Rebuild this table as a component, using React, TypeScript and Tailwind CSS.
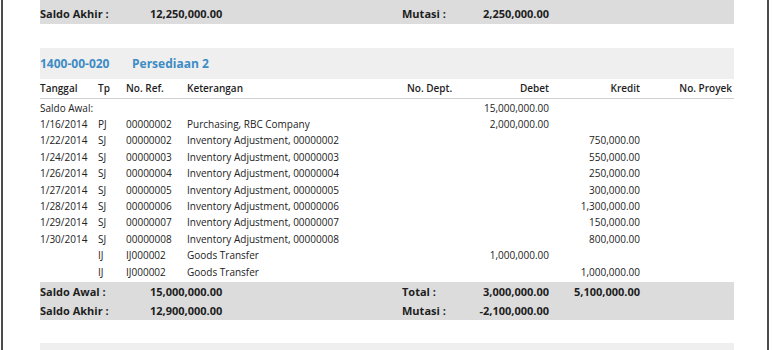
import React from "react";

interface Row {
  tanggal: string;
  tp: string;
  ref: string;
  ket: string;
  dept: string;
  debet: string;
  kredit: string;
  proyek: string;
}

const rows: Row[] = [
  { tanggal: "Saldo Awal:", tp: "", ref: "", ket: "", dept: "", debet: "15,000,000.00", kredit: "", proyek: "" },
  { tanggal: "1/16/2014", tp: "PJ", ref: "00000002", ket: "Purchasing, RBC Company", dept: "", debet: "2,000,000.00", kredit: "", proyek: "" },
  { tanggal: "1/22/2014", tp: "SJ", ref: "00000002", ket: "Inventory Adjustment, 00000002", dept: "", debet: "", kredit: "750,000.00", proyek: "" },
  { tanggal: "1/24/2014", tp: "SJ", ref: "00000003", ket: "Inventory Adjustment, 00000003", dept: "", debet: "", kredit: "550,000.00", proyek: "" },
  { tanggal: "1/26/2014", tp: "SJ", ref: "00000004", ket: "Inventory Adjustment, 00000004", dept: "", debet: "", kredit: "250,000.00", proyek: "" },
  { tanggal: "1/27/2014", tp: "SJ", ref: "00000005", ket: "Inventory Adjustment, 00000005", dept: "", debet: "", kredit: "300,000.00", proyek: "" },
  { tanggal: "1/28/2014", tp: "SJ", ref: "00000006", ket: "Inventory Adjustment, 00000006", dept: "", debet: "", kredit: "1,300,000.00", proyek: "" },
  { tanggal: "1/29/2014", tp: "SJ", ref: "00000007", ket: "Inventory Adjustment, 00000007", dept: "", debet: "", kredit: "150,000.00", proyek: "" },
  { tanggal: "1/30/2014", tp: "SJ", ref: "00000008", ket: "Inventory Adjustment, 00000008", dept: "", debet: "", kredit: "800,000.00", proyek: "" },
  { tanggal: "", tp: "IJ", ref: "IJ000002", ket: "Goods Transfer", dept: "", debet: "1,000,000.00", kredit: "", proyek: "" },
  { tanggal: "", tp: "IJ", ref: "IJ000002", ket: "Goods Transfer", dept: "", debet: "", kredit: "1,000,000.00", proyek: "" },
];

const cols = "grid grid-cols-[58px_28px_61px_220px_62px_80px_91px_92px]";

function SummaryRow({ label, value, label2, value2, value3 }: { label: string; value: string; label2: string; value2: string; value3?: string }) {
  return (
    <div className="flex h-[19px] items-center text-[11px] font-bold text-[#1e1e1e]">
      <div className="w-[110px]">{label}</div>
      <div className="w-[252px]">{value}</div>
      <div className="w-[67px]">{label2}</div>
      <div className="w-[80px] text-right">{value2}</div>
      <div className="w-[91px] text-right">{value3}</div>
    </div>
  );
}

export default function App() {
  return (
    <div className="h-[350px] w-[772px] overflow-hidden bg-white" style={{ fontFamily: '"Open Sans", "Noto Sans", sans-serif' }}>
      <div className="ml-[1px] flex h-full w-[768px] flex-col border-x-2 border-[#4b4b4b] pl-[37px] pr-[33px]">
        {/* previous account footer, cut at the top */}
        <div className="-mt-[14px] shrink-0 bg-[#dcdcdc]">
          <SummaryRow label="Saldo Awal :" value="10,000,000.00" label2="Total :" value2="4,500,000.00" value3="2,250,000.00" />
          <SummaryRow label="Saldo Akhir :" value="12,250,000.00" label2="Mutasi :" value2="2,250,000.00" />
        </div>

        <div className="mt-[24px] flex h-[31px] shrink-0 items-center bg-[#efefef] text-[12px] font-bold text-[#3d8cc4]">
          <div className="w-[92px]">1400-00-020</div>
          <div>Persediaan 2</div>
        </div>

        <div className={`${cols} h-[20px] shrink-0 items-center border-b border-[#d0d0d0] text-[10px] font-semibold text-[#1e1e1e]`}>
          <div>Tanggal</div>
          <div>Tp</div>
          <div>No. Ref.</div>
          <div>Keterangan</div>
          <div>No. Dept.</div>
          <div className="text-right">Debet</div>
          <div className="text-right">Kredit</div>
          <div className="text-right">No. Proyek</div>
        </div>

        <div className="shrink-0 pt-px">
          {rows.map((r, i) => (
            <div key={i} className={`${cols} h-[16.4px] items-center text-[10px] text-[#222]`}>
              <div className="whitespace-nowrap">{r.tanggal}</div>
              <div>{r.tp}</div>
              <div>{r.ref}</div>
              <div className="whitespace-nowrap">{r.ket}</div>
              <div>{r.dept}</div>
              <div className="text-right">{r.debet}</div>
              <div className="text-right">{r.kredit}</div>
              <div className="text-right">{r.proyek}</div>
            </div>
          ))}
        </div>

        <div className="mt-[2px] shrink-0 bg-[#dcdcdc]">
          <SummaryRow label="Saldo Awal :" value="15,000,000.00" label2="Total :" value2="3,000,000.00" value3="5,100,000.00" />
          <SummaryRow label="Saldo Akhir :" value="12,900,000.00" label2="Mutasi :" value2="-2,100,000.00" />
        </div>

        <div className="mt-[23px] h-[31px] shrink-0 bg-[#efefef]" />
      </div>
    </div>
  );
}
